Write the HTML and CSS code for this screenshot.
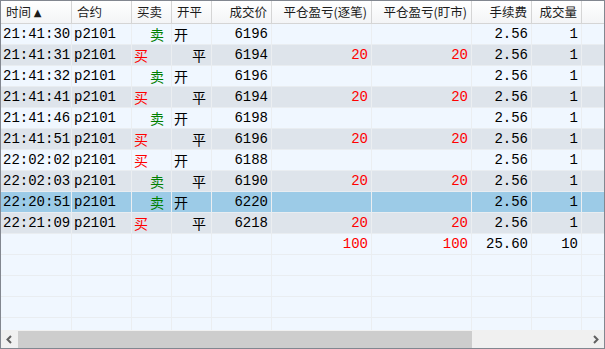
FILE: index.html
```html
<!DOCTYPE html>
<html lang="zh">
<head>
  <meta charset="UTF-8" />
  <title>成交记录</title>
  <link rel="stylesheet" href="styles.css">
</head>
<body>
  <div class="grid">
    <div class="row head">
      <div class="c c1 l">时间 <span class="sort">▲</span></div>
      <div class="c c2 l">合约</div>
      <div class="c c3 l">买卖</div>
      <div class="c c4 l">开平</div>
      <div class="c c5">成交价</div>
      <div class="c c6">平仓盈亏(逐笔)</div>
      <div class="c c7">平仓盈亏(盯市)</div>
      <div class="c c8">手续费</div>
      <div class="c c9">成交量</div>
      <div class="c fill"></div>
    </div>
    <div class="body" id="body"></div>
    <div class="hscroll">
      <svg class="arrow" viewBox="0 0 17 17"><path d="M10 5 L6.5 8.5 L10 12" fill="none" stroke="#606060" stroke-width="2"/></svg>
      <div class="track"><div class="thumb"></div></div>
      <svg class="arrow" viewBox="0 0 17 17"><path d="M7 5 L10.5 8.5 L7 12" fill="none" stroke="#606060" stroke-width="2"/></svg>
    </div>
  </div>

  <script>
    var trades = [
      ['21:41:30', '卖', '开', 6196, '', ''],
      ['21:41:31', '买', '平', 6194, 20, 20],
      ['21:41:32', '卖', '开', 6196, '', ''],
      ['21:41:41', '买', '平', 6194, 20, 20],
      ['21:41:46', '卖', '开', 6198, '', ''],
      ['21:41:51', '买', '平', 6196, 20, 20],
      ['22:02:02', '买', '开', 6188, '', ''],
      ['22:02:03', '卖', '平', 6190, 20, 20],
      ['22:20:51', '卖', '开', 6220, '', ''],
      ['22:21:09', '买', '平', 6218, 20, 20]
    ];
    var selected = 8;

    var body = document.getElementById('body');
    var html = '';
    trades.forEach(function (t, i) {
      var cls = 'row ' + (i % 2 ? 'even' : 'odd') + (i === selected ? ' sel' : '');
      html += '<div class="' + cls + '">' +
        '<div class="c c1 l">' + t[0] + '</div>' +
        '<div class="c c2 l">p2101</div>' +
        '<div class="c c3 l ' + (t[1] === '买' ? 'buy' : 'sell') + '">' + t[1] + '</div>' +
        '<div class="c c4 l ' + (t[2] === '开' ? 'open' : 'close') + '">' + t[2] + '</div>' +
        '<div class="c c5">' + t[3] + '</div>' +
        '<div class="c c6 red">' + t[4] + '</div>' +
        '<div class="c c7 red">' + t[5] + '</div>' +
        '<div class="c c8">2.56</div>' +
        '<div class="c c9">1</div>' +
        '<div class="c fill"></div></div>';
    });
    // 合计行
    html += '<div class="row odd">' +
      '<div class="c c1"></div><div class="c c2"></div><div class="c c3"></div><div class="c c4"></div><div class="c c5"></div>' +
      '<div class="c c6 red">100</div><div class="c c7 red">100</div>' +
      '<div class="c c8">25.60</div><div class="c c9">10</div><div class="c fill"></div></div>';
    for (var k = 0; k < 5; k++) {
      html += '<div class="row odd"><div class="c c1"></div><div class="c c2"></div><div class="c c3"></div><div class="c c4"></div><div class="c c5"></div><div class="c c6"></div><div class="c c7"></div><div class="c c8"></div><div class="c c9"></div><div class="c fill"></div></div>';
    }
    body.innerHTML = html;
  </script>
</body>
</html>
```

FILE: styles.css
```css
body {
  margin: 0;
  background: #fff;
}
.grid {
  width: 605px;
  height: 349px;
  box-sizing: border-box;
  border: 1px solid #828790;
  display: flex;
  flex-direction: column;
  background: #f0f7ff;
  overflow: hidden;
}
.row {
  display: flex;
  height: 21px;
  box-sizing: border-box;
  border-bottom: 1px solid #e9edf1;
  font-family: "Liberation Mono", "Noto Sans CJK SC", monospace;
  font-size: 14px;
  line-height: 21px;
  color: #000;
}
.row.head {
  height: 23px;
  line-height: 22px;
  border-bottom: 1px solid #d5d5d5;
  background: linear-gradient(#ffffff, #f3f4f6);
  font-family: "Noto Sans CJK SC", "Liberation Sans", sans-serif;
  font-size: 12.5px;
  color: #1b1b1b;
}
.sort {
  font-family: "DejaVu Sans", sans-serif;
  font-size: 10px;
  vertical-align: 1px;
}
.body {
  flex: 1;
  overflow: hidden;
}
.odd { background: #f0f7ff; }
.even { background: #dee4eb; }
.sel { background: #9ccbe7; }
.c {
  box-sizing: border-box;
  border-right: 1px solid #ebeef1;
  padding: 0 3px 0 2px;
  text-align: right;
  white-space: nowrap;
  overflow: hidden;
}
.head .c {
  border-right-color: #d5d5d5;
  padding: 0 4px;
}
.c.l { text-align: left; }
.head .c.l { padding-left: 5px; }
.c1 { width: 71px; }
.c2 { width: 60px; }
.c3 { width: 40px; }
.c4 { width: 40px; }
.c5 { width: 60px; }
.c6 { width: 100px; }
.c7 { width: 100px; }
.c8 { width: 60px; }
.c9 { width: 50px; }
.fill { flex: 1; border-right: 0; }
.buy, .sell, .open, .close {
  font-family: "Noto Sans CJK SC", sans-serif;
  font-size: 14px;
}
.buy { color: #ff0000; }
.sell { color: #008000; padding-left: 18px; }
.close { padding-left: 20px; }
.red { color: #ff0000; }
.hscroll {
  height: 17px;
  display: flex;
  align-items: center;
  background: #f0f0f0;
  border-top: 1px solid #f0f0f0;
}
.arrow {
  width: 17px;
  height: 17px;
  flex: none;
}
.track {
  flex: 1;
  height: 17px;
}
.thumb {
  width: 454px;
  height: 100%;
  background: #cdcdcd;
}
```
